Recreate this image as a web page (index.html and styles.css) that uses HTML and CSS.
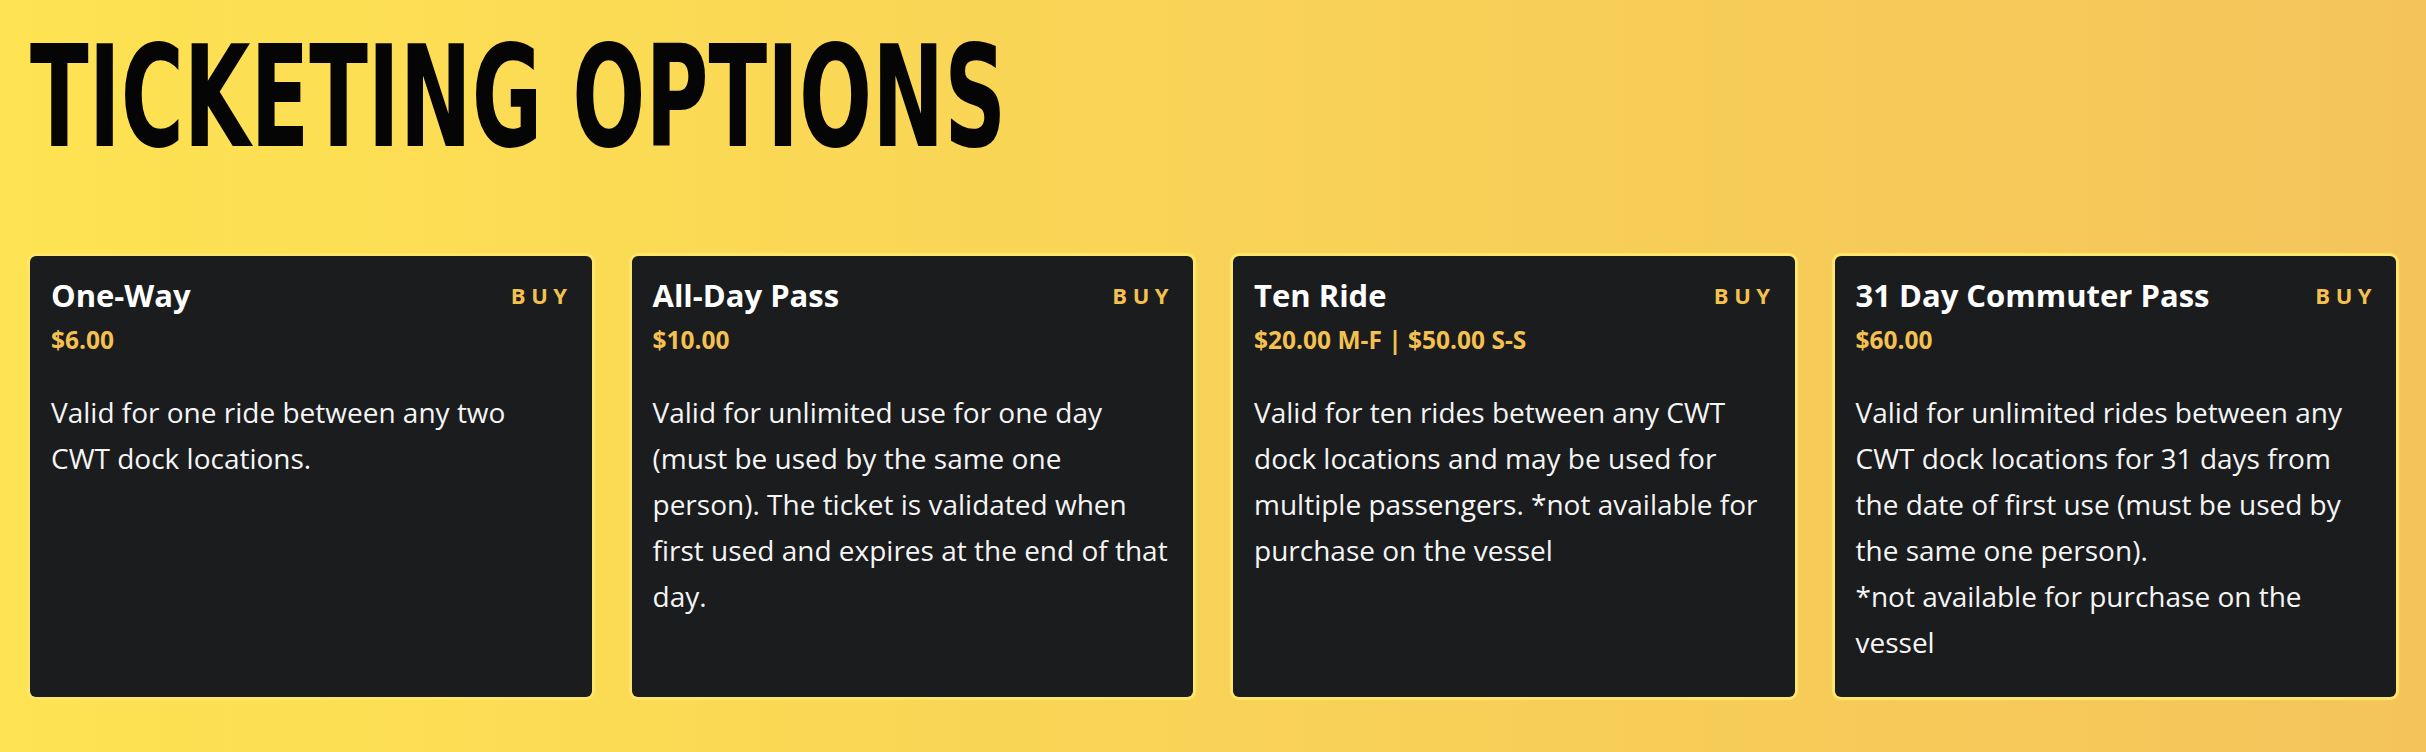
FILE: index.html
```html
<!DOCTYPE html>
<html lang="en">
<head>
<meta charset="utf-8">
<title>Ticketing Options</title>
<link rel="stylesheet" href="styles.css">
</head>
<body>
<main class="page">
  <h1 class="page-title">TICKETING OPTIONS</h1>
  <section class="tickets">
    <article class="ticket">
      <header class="ticket-head">
        <h2 class="ticket-name">One-Way</h2>
        <a class="ticket-buy" href="#">BUY</a>
      </header>
      <p class="ticket-price">$6.00</p>
      <p class="ticket-desc">Valid for one ride between any two CWT dock locations.</p>
    </article>
    <article class="ticket">
      <header class="ticket-head">
        <h2 class="ticket-name">All-Day Pass</h2>
        <a class="ticket-buy" href="#">BUY</a>
      </header>
      <p class="ticket-price">$10.00</p>
      <p class="ticket-desc">Valid for unlimited use for one day (must be used by the same one person). The ticket is validated when first used and expires at the end of that day.</p>
    </article>
    <article class="ticket">
      <header class="ticket-head">
        <h2 class="ticket-name">Ten Ride</h2>
        <a class="ticket-buy" href="#">BUY</a>
      </header>
      <p class="ticket-price">$20.00 M-F | $50.00 S-S</p>
      <p class="ticket-desc">Valid for ten rides between any CWT dock locations and may be used for multiple passengers. *not available for purchase on the vessel</p>
    </article>
    <article class="ticket">
      <header class="ticket-head">
        <h2 class="ticket-name">31 Day Commuter Pass</h2>
        <a class="ticket-buy" href="#">BUY</a>
      </header>
      <p class="ticket-price">$60.00</p>
      <p class="ticket-desc">Valid for unlimited rides between any CWT dock locations for 31 days from the date of first use (must be used by the same one person).<br>*not available for purchase on the vessel</p>
    </article>
  </section>
</main>
</body>
</html>
```

FILE: styles.css
```css
html, body {
  margin: 0;
  padding: 0;
}

body {
  width: 2426px;
  height: 752px;
  overflow: hidden;
  background: linear-gradient(90deg, #fee352 0%, #f9d456 45%, #f4c45b 100%);
  font-family: "Open Sans", "Liberation Sans", sans-serif;
}

.page {
  padding: 0 30px;
}

.page-title {
  display: inline-block;
  margin: 0;
  padding-top: 13px;
  font-family: "DejaVu Sans Condensed", "Liberation Sans", sans-serif;
  font-weight: 700;
  font-size: 141px;
  line-height: 168px;
  color: #050505;
  letter-spacing: 0;
  transform-origin: left top;
  transform: scaleX(0.678);
}

.tickets {
  display: grid;
  grid-template-columns: repeat(4, 1fr);
  gap: 40px;
  margin-top: 75px;
}

.ticket {
  background: #1b1c1e;
  border-radius: 6px;
  box-shadow: 0 0 1px 3px #fde66c;
  padding: 21px 21px 32px 21px;
  color: #f7f7f7;
}

.ticket-head {
  display: flex;
  justify-content: space-between;
  align-items: flex-start;
}

.ticket-name {
  margin: 0;
  font-size: 31px;
  font-weight: 700;
  line-height: 36px;
  color: #ffffff;
}

.ticket-buy {
  font-size: 22px;
  font-weight: 700;
  letter-spacing: 5.5px;
  line-height: 36px;
  color: #f4c150;
  text-decoration: none;
  margin-right: -2px;
}

.ticket-price {
  margin: 12px 0 0 0;
  font-size: 24.5px;
  font-weight: 700;
  line-height: 29px;
  color: #f4c150;
}

.ticket-desc {
  margin: 35px 0 0 0;
  font-size: 28px;
  line-height: 46px;
  color: #f5f5f5;
}
```
